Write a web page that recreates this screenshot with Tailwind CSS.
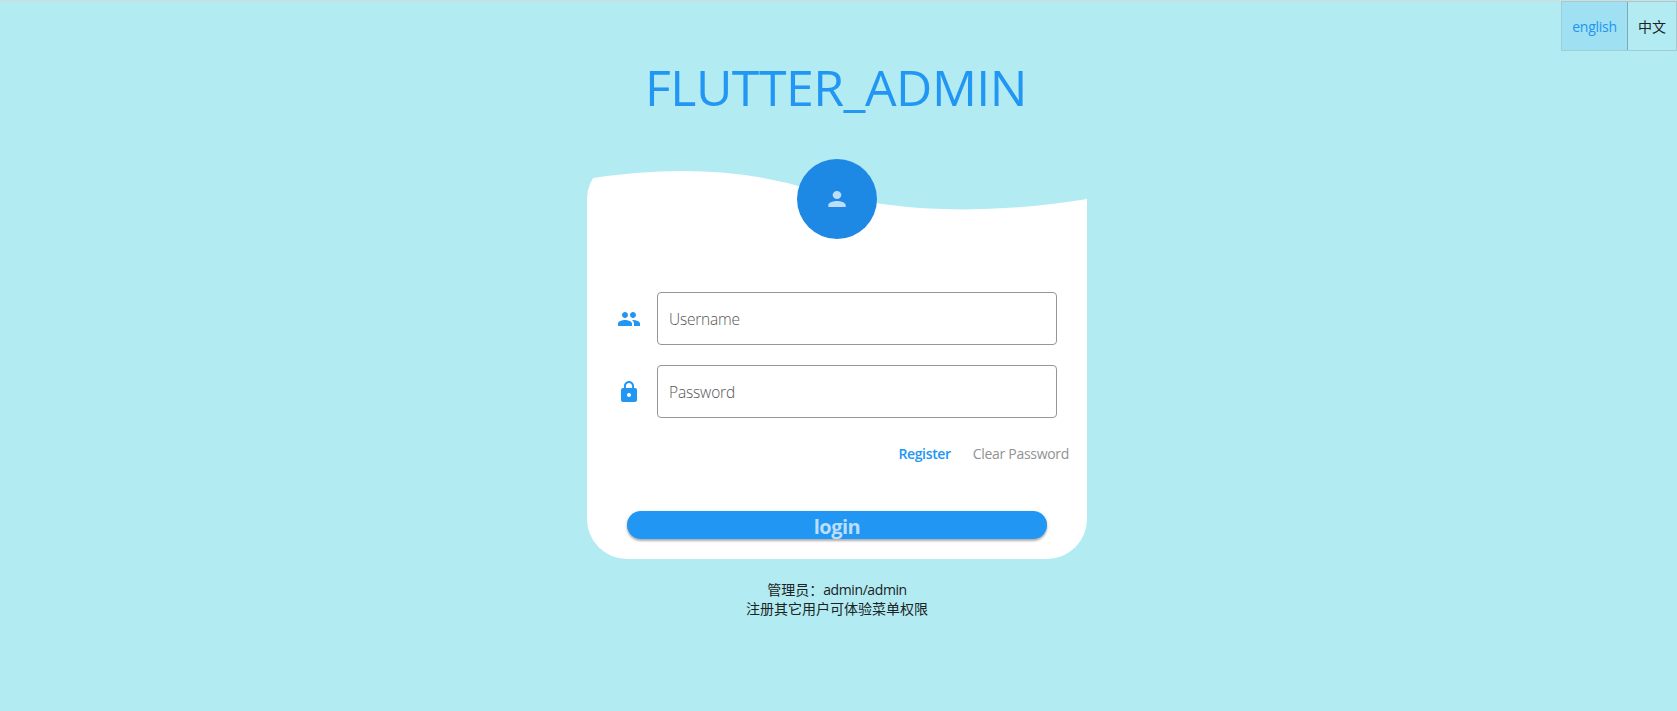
<!DOCTYPE html>
<html lang="en">
<head>
<meta charset="utf-8">
<title>FLUTTER_ADMIN</title>
<script src="https://cdn.jsdelivr.net/npm/@tailwindcss/browser@4"></script>
</head>
<body class="relative h-[711px] overflow-hidden bg-[#b2ebf2] border-t border-[#d5dadb] pr-[3px] font-['Open_Sans','Noto_Sans_CJK_SC',sans-serif]">
  <div class="absolute top-0 right-0 flex h-[50px] w-[116px] border border-[#9ecdd3] text-[14px]">
    <button class="flex w-[66px] items-center justify-center border-r border-[#7fa9ae] bg-[#9fe0f2] pt-px text-[#2196f3]"><span class="tracking-[-0.25px]">english</span></button>
    <button class="flex flex-1 items-center justify-center pt-px text-[#1b2324]">中文</button>
  </div>
  <main class="mx-auto flex w-[500px] flex-col">
    <h1 class="mt-[50px] flex h-[72px] items-center justify-center text-[50px] whitespace-nowrap text-[#2196f3]"><span class="-ml-0.5 tracking-[-0.5px]">FLUTTER_ADMIN</span></h1>
    <section class="relative mt-9 h-[400px] w-[500px]">
      <svg class="absolute inset-0" width="500" height="400" viewBox="0 0 500 400"><defs><clipPath id="wave"><path d="M0 20Q125 0 222.2 30Q346.15 65 500 40V400H0Z"/></clipPath></defs><rect width="500" height="400" rx="40" fill="#fff" clip-path="url(#wave)"/></svg>
      <div class="relative flex flex-col">
        <div class="mx-auto flex size-20 items-center justify-center rounded-full bg-[#1e88e5]">
          <svg width="26" height="24" viewBox="0 0 24 24" preserveAspectRatio="none" fill="#bbdefb"><path d="M12 12c2.21 0 4-1.79 4-4s-1.79-4-4-4-4 1.79-4 4 1.79 4 4 4zm0 2c-2.67 0-8 1.34-8 4v2h16v-2c0-2.66-5.33-4-8-4z"/></svg>
        </div>
        <div class="mt-[53px] flex items-center pl-[30px]">
          <svg width="24" height="24" viewBox="0 0 24 24" fill="#2196f3"><path d="M16 11c1.66 0 2.99-1.34 2.99-3S17.66 5 16 5c-1.66 0-3 1.34-3 3s1.34 3 3 3zm-8 0c1.66 0 2.99-1.34 2.99-3S9.66 5 8 5C6.34 5 5 6.34 5 8s1.34 3 3 3zm0 2c-2.33 0-7 1.17-7 3.5V19h14v-2.5c0-2.33-4.67-3.500-7-3.500zm8 0c-.29 0-.62.02-.97.05 1.160.84 1.970 1.970 1.970 3.450V19h6v-2.500c0-2.330-4.670-3.500-7-3.500z"/></svg>
          <div class="ml-4 flex h-[53px] w-[400px] items-center rounded-[4px] border border-[#969696] pt-[3px] pl-[11px] text-[15.5px] font-light text-[#555]"><span class="tracking-[-0.2px]">Username</span></div>
        </div>
        <div class="mt-5 flex items-center pl-[30px]">
          <svg width="24" height="24" viewBox="0 0 24 24" fill="#2196f3"><path d="M18 8h-1V6c0-2.760-2.240-5-5-5S7 3.240 7 6v2H6c-1.100 0-2 .9-2 2v10c0 1.100.9 2 2 2h12c1.100 0 2-.9 2-2V10c0-1.100-.9-2-2-2zm-6 9c-1.100 0-2-.9-2-2s.9-2 2-2 2 .9 2 2-.9 2-2 2zm3.100-9H8.900V6c0-1.710 1.390-3.100 3.100-3.100s3.100 1.390 3.100 3.100v2z"/></svg>
          <div class="ml-4 flex h-[53px] w-[400px] items-center rounded-[4px] border border-[#969696] pt-[3px] pl-[11px] text-[15.5px] font-light text-[#555]"><span class="tracking-[-0.15px]">Password</span></div>
        </div>
        <div class="mt-[26px] flex h-5 items-center justify-end gap-[22px] pr-[18px] text-[14px] leading-5 whitespace-nowrap">
          <a class="font-semibold text-[#2196f3]"><span class="tracking-[-0.35px]">Register</span></a>
          <a class="text-[#929292]"><span class="tracking-[-0.3px]">Clear Password</span></a>
        </div>
        <button class="mx-10 mt-[47px] flex h-7 items-center justify-center rounded-full bg-[#2196f3] pt-1 text-[20px] leading-6 font-bold text-[#bbdefb] shadow-[0_2px_2px_rgba(0,0,0,0.24),0_1px_4px_rgba(0,0,0,0.14)]"><span class="tracking-[-0.5px]">login</span></button>
      </div>
    </section>
    <footer class="mt-[21px] text-center text-[14px] leading-[19px] text-[#1b2324]">
      <p>管理员：<span class="tracking-[-0.4px]">admin/admin</span></p>
      <p>注册其它用户可体验菜单权限</p>
    </footer>
  </main>
</body>
</html>
